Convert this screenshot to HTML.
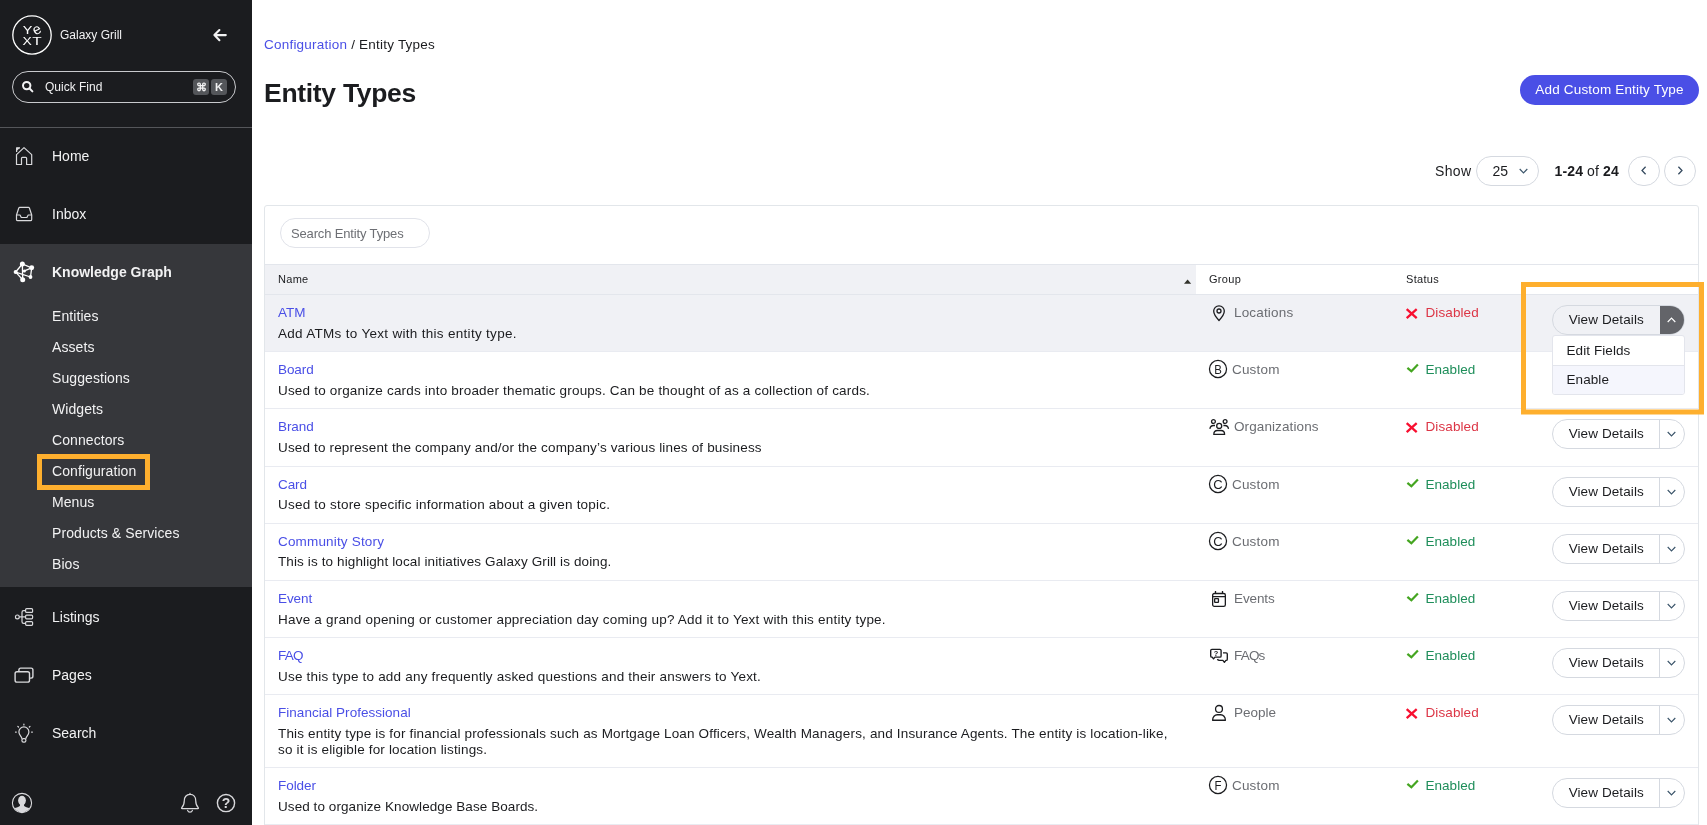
<!DOCTYPE html>
<html lang="en">
<head>
<meta charset="utf-8">
<title>Entity Types</title>
<style>
*{box-sizing:border-box;margin:0;padding:0}
html,body{width:1707px;height:825px;overflow:hidden;background:#fff}
body{font-family:"Liberation Sans",sans-serif;color:#1b1c1f;position:relative}
a{text-decoration:none;color:inherit}
svg{display:block}
.abs{position:absolute}

/* ---------- sidebar ---------- */
#side{position:absolute;left:0;top:0;width:252px;height:825px;background:#1b1c1f;color:#f2f2f3;will-change:transform}
#side .logo{position:absolute;left:12px;top:15px;width:40px;height:40px}
#side .acct{position:absolute;left:60px;top:28px;font-size:12px;line-height:15px;color:#f2f2f3}
#side .back{position:absolute;left:212px;top:27px;width:17px;height:16px}
#side .qf{position:absolute;left:12px;top:71px;width:224px;height:32px;border:1px solid #c9cacd;border-radius:16px}
#side .qf .mag{position:absolute;left:8px;top:7px;width:15px;height:15px}
#side .qf .ph{position:absolute;left:32px;top:8px;font-size:12px;line-height:15px;color:#f2f2f3}
#side .qf .key{position:absolute;top:7px;height:16px;width:16px;border-radius:3px;background:#54565a;color:#f2f2f3;font-size:11px;line-height:16px;text-align:center;font-weight:bold}
#side .div{position:absolute;left:0;top:127px;width:252px;height:1px;background:#55565a}
#side .active{position:absolute;left:0;top:244px;width:252px;height:343px;background:#36373b}
.nav{position:absolute;left:52px;font-size:14px;line-height:18px;color:#f2f2f3;white-space:nowrap}
.nav.b{font-weight:bold}
.sub{position:absolute;left:52px;font-size:14px;line-height:18px;color:#f2f2f3;white-space:nowrap;letter-spacing:.08px}
.ico{position:absolute;left:12px;width:24px;height:24px}
.hl{position:absolute;border:5px solid #feaf2e}

/* ---------- main ---------- */
#main{position:absolute;left:252px;top:0;width:1455px;height:825px;background:#fff;will-change:transform}
.crumb{position:absolute;left:12px;top:36px;font-size:13.5px;line-height:17px;white-space:nowrap;color:#1b1c1f;letter-spacing:.22px}
.crumb a{color:#4a4fe6}
h1{position:absolute;left:12px;top:76px;font-size:26.5px;line-height:34px;font-weight:bold;color:#1b1c1f;white-space:nowrap;letter-spacing:-.3px}
.addbtn{position:absolute;left:1268px;top:75px;width:179px;height:30px;border-radius:15px;background:#4a4fe6;color:#fff;font-size:13.5px;line-height:30px;text-align:center;white-space:nowrap;letter-spacing:.17px}

.pg{position:absolute;top:155.5px;height:30px;font-size:14px;line-height:30px;white-space:nowrap;color:#1b1c1f}
.pill{position:absolute;top:156px;height:30px;border:1px solid #d5d9e0;border-radius:15px;background:#fff}
.card{position:absolute;left:12px;top:205px;width:1435px;height:640px;border:1px solid #e2e6ea;border-radius:3px;background:#fff}
.sinput{position:absolute;left:28px;top:218px;width:150px;height:30px;border:1px solid #e1e3ea;border-radius:15px;font-size:13px;line-height:30px;padding-left:10px;color:#6d6f74;white-space:nowrap;letter-spacing:-.15px}
.thead{position:absolute;left:13px;top:264px;width:1433px;height:31px;border-top:1px solid #e3e6ec;border-bottom:1px solid #e3e6ec;background:#fff}
.thead .sorted{position:absolute;left:0;top:0;width:931px;height:29px;background:#f0f1f5}
.th{position:absolute;top:8px;font-size:11px;line-height:13px;color:#1b1c1f;white-space:nowrap;letter-spacing:.3px}
.row{position:absolute;left:13px;width:1433px;border-bottom:1px solid #e9ebf1}
.row.sel{background:#f0f1f5}
.row .nm{position:absolute;left:13px;top:9px;font-size:13.5px;line-height:17px;color:#4a4fe6;white-space:nowrap;letter-spacing:.1px}
.row .ds{position:absolute;left:13px;top:31px;font-size:13.5px;line-height:16px;color:#1b1c1f;white-space:nowrap;letter-spacing:.22px}
.row .gi{position:absolute;left:943px;top:8px;width:20px;height:20px;overflow:visible}
.row .gp{position:absolute;top:9px;font-size:13.5px;line-height:17px;color:#6b6d72;white-space:nowrap;letter-spacing:.3px}
.row .si{position:absolute;left:1140px;top:12px;width:15px;height:13px}
.row .st{position:absolute;left:1160.5px;top:9px;font-size:13.5px;line-height:17px;white-space:nowrap;letter-spacing:.1px}
.st.dis{color:#dc3545}
.st.en{color:#1e8e5a;letter-spacing:.03px}
.vd{position:absolute;left:1287px;top:10px;width:133px;height:30px;border:1px solid #d5d9e0;border-radius:15px;background:#fff;overflow:hidden}
.vd .t{position:absolute;left:0;top:0;width:106.5px;height:28px;line-height:28px;text-align:center;font-size:13.5px;color:#1b1c1f;letter-spacing:.1px;white-space:nowrap}
.vd .c{position:absolute;left:106px;top:0;width:26px;height:28px;border-left:1px solid #d5d9e0}
.vd .c svg{position:absolute;left:6px;top:10px;width:11px;height:8px}
.vd.open{background:#f0f1f5}
.vd.open .c svg{top:11px;left:5px}
.vd.open .c{background:#636469;border-left-color:#636469;left:107px;top:-1px;height:30px;width:26px}
.menu{position:absolute;left:1300px;top:335px;width:133px;height:60px;border:1px solid #e3e5ec;border-radius:3px;background:#fff;overflow:hidden}
.menu div{height:29px;line-height:30px;padding-left:13.5px;font-size:13.5px;color:#1b1c1f;letter-spacing:.08px;white-space:nowrap}
.menu div+div{border-top:1px solid #e3e5ec;background:#f5f6fd;height:29px;line-height:27px}
</style>
</head>
<body>

<div id="side">
  <svg class="logo" viewBox="0 0 40 40" fill="none" stroke="#fff" stroke-width="1.3">
    <circle cx="20" cy="20" r="19.2"/>
    <g stroke="none" fill="#fff" font-family="Liberation Sans, sans-serif" font-size="11.2">
      <text x="10.7" y="19" textLength="9.6" lengthAdjust="spacingAndGlyphs">Y</text>
      <text x="21" y="19.1" font-size="14.6" transform="rotate(-27 25.1 15.2)">e</text>
      <text x="10.4" y="29.7" textLength="9.3" lengthAdjust="spacingAndGlyphs">X</text>
      <text x="20.3" y="29.7" textLength="9.4" lengthAdjust="spacingAndGlyphs">T</text>
    </g>
  </svg>
  <div class="acct">Galaxy Grill</div>
  <svg class="back" viewBox="0 0 17 16" fill="none" stroke="#f2f2f3" stroke-width="2.1" stroke-linecap="round" stroke-linejoin="round"><path d="M13.8 8.1H3M7.4 3L2.4 8.1L7.4 13.2"/></svg>
  <div class="qf">
    <svg class="mag" viewBox="0 0 15 15" fill="none" stroke="#f2f2f3" stroke-width="2"><circle cx="5.7" cy="6.6" r="3.7"/><path d="M8.6 9.5L11.4 12.4" stroke-linecap="round"/></svg>
    <div class="ph">Quick Find</div>
    <div class="key" style="left:180px">⌘</div>
    <div class="key" style="left:198px">K</div>
  </div>
  <div class="div"></div>
  <div class="active"></div>


  <svg class="ico" style="top:144px" viewBox="0 0 24 24" fill="none" stroke="#d9d9dc" stroke-width="1.2" stroke-linejoin="round"><path d="M4.5 10.6L12 3.6L19.7 10.6V20.5H14.6V14.3Q14.6 13.4 13.7 13.4H10.4Q9.5 13.4 9.5 14.3V20.5H4.5Z"/><path d="M4.6 8V3.8H8" /><path d="M4.6 3.8H8L4.6 7Z" fill="#d9d9dc" stroke="none"/></svg>
  <svg class="ico" style="top:202px" viewBox="0 0 24 24" fill="none" stroke="#d9d9dc" stroke-width="1.2" stroke-linejoin="round"><path d="M4.5 13L6.8 6Q7 5.3 7.7 5.3H16.5Q17.2 5.3 17.4 6L19.7 13V17.4Q19.7 18.7 18.4 18.7H5.8Q4.5 18.7 4.5 17.4Z"/><path d="M4.5 13H8L9.3 15.5H14.9L16.2 13H19.7"/></svg>
  <svg class="ico" style="top:260px" viewBox="0 0 24 24" fill="#fff" stroke="#fff" stroke-width="1.3"><path d="M10.35 4L3.65 12.1L10.7 19.7L10.35 4L19.7 7.8L18.5 17L3.65 12.1M12.4 10.9L19.7 7.8" fill="none"/><circle cx="10.35" cy="4" r="2.5" stroke="none"/><circle cx="19.7" cy="7.8" r="2.45" stroke="none"/><circle cx="3.65" cy="12.1" r="2" stroke="none"/><circle cx="10.7" cy="19.7" r="2.5" stroke="none"/><circle cx="18.5" cy="17" r="1.9" stroke="none"/><circle cx="12.4" cy="10.9" r="1.5" stroke="none"/></svg>
  <svg class="ico" style="top:605px" viewBox="0 0 24 24" fill="none" stroke="#d9d9dc" stroke-width="1.2"><circle cx="5.35" cy="11.9" r="1.9"/><rect x="13.6" y="3.7" width="7" height="3.7" rx="1"/><rect x="13.6" y="10.1" width="7" height="3.7" rx="1"/><rect x="13.6" y="16.6" width="7" height="3.7" rx="1"/><path d="M7.3 11.9H13.6M13.6 5.6H11.6Q10 5.6 10 7.2V16.8Q10 18.4 11.6 18.4H13.6"/></svg>
  <svg class="ico" style="top:663px" viewBox="0 0 24 24" fill="none" stroke="#d9d9dc" stroke-width="1.4"><rect x="3.1" y="8.7" width="14.4" height="10.4" rx="1.9"/><path d="M6.9 8.7V6.9Q6.9 5.1 8.7 5.1H19.1Q20.9 5.1 20.9 6.9V13.3Q20.9 15.1 19.1 15.1H17.5"/></svg>
  <svg class="ico" style="top:721px" viewBox="0 0 24 24" fill="none" stroke="#d9d9dc" stroke-width="1.2" stroke-linecap="round"><path d="M9.9 17.6C9.9 15.6 6.9 14.2 6.9 10.9A5 5 0 0 1 16.9 10.9C16.9 14.2 13.9 15.6 13.9 17.6"/><rect x="9.9" y="17.6" width="4" height="3.6" rx="1.6"/><path d="M11.9 3.1V3.9M5.8 5.3L6.5 6M18 5.3L17.3 6M3.5 11.1H4.3M19.6 11.1H20.4"/></svg>
  <svg class="abs" style="left:10px;top:791px;width:24px;height:24px" viewBox="0 0 24 24"><defs><clipPath id="uc"><circle cx="12" cy="12" r="9.2"/></clipPath></defs><g clip-path="url(#uc)" fill="#d9d9dc"><ellipse cx="12" cy="9.6" rx="3.9" ry="4.8"/><path d="M10 13V14.5C10 16 4 16.5 3 19V23H21V19C20 16.5 14 16 14 14.5V13Z"/></g><circle cx="12" cy="12" r="9.6" fill="none" stroke="#d9d9dc" stroke-width="1.1"/></svg>
  <svg class="abs" style="left:178px;top:791px;width:24px;height:24px" viewBox="0 0 24 24" fill="none" stroke="#d9d9dc" stroke-width="1.2" stroke-linejoin="round" stroke-linecap="round"><path d="M12 2.3V3.4M12 3.4C8.2 3.4 6.3 6.3 6.3 9.5C6.3 13.5 5.2 15.3 3.6 16.9Q3.3 17.6 4.1 17.7H19.9Q20.7 17.6 20.4 16.9C18.8 15.3 17.7 13.5 17.7 9.5C17.7 6.3 15.8 3.4 12 3.4Z"/><path d="M9.6 19.3A2.5 2.5 0 0 0 14.4 19.3"/></svg>
  <svg class="abs" style="left:214px;top:791px;width:24px;height:24px" viewBox="0 0 24 24"><circle cx="12" cy="12.05" r="8.6" fill="none" stroke="#d9d9dc" stroke-width="1.4"/><text x="12" y="17" text-anchor="middle" font-family="Liberation Sans, sans-serif" font-weight="bold" font-size="14" fill="#d9d9dc">?</text></svg>
  <div class="nav" style="top:147px">Home</div>
  <div class="nav" style="top:205px">Inbox</div>
  <div class="nav b" style="top:263px">Knowledge Graph</div>

  <div class="sub" style="top:307px">Entities</div>
  <div class="sub" style="top:338px">Assets</div>
  <div class="sub" style="top:369px">Suggestions</div>
  <div class="sub" style="top:400px">Widgets</div>
  <div class="sub" style="top:431px">Connectors</div>
  <div class="sub" style="top:462px">Configuration</div>
  <div class="sub" style="top:493px">Menus</div>
  <div class="sub" style="top:524px">Products &amp; Services</div>
  <div class="sub" style="top:555px">Bios</div>
  <div class="hl" style="left:37px;top:454px;width:113px;height:36px"></div>

  <div class="nav" style="top:608px">Listings</div>
  <div class="nav" style="top:666px">Pages</div>
  <div class="nav" style="top:724px">Search</div>
</div>

<div id="main">
  <div class="crumb"><a>Configuration</a> / Entity Types</div>
  <h1>Entity Types</h1>
  <div class="addbtn">Add Custom Entity Type</div>

  <div class="pg" style="left:1183px;letter-spacing:.35px">Show</div>
  <div class="pill" style="left:1224px;width:63px"><span class="abs" style="left:15.5px;top:0;font-size:14px;line-height:28px">25</span><svg class="abs" style="left:40.5px;top:10px;width:11px;height:8px" viewBox="0 0 11 8" fill="none" stroke="#3c566b" stroke-width="1.15"><path d="M1.7 2L5.5 5.9L9.3 2"/></svg></div>
  <div class="pg" style="left:1302.5px;letter-spacing:.14px"><b>1-24</b> of <b>24</b></div>
  <div class="pill" style="left:1376px;width:32px"><svg class="abs" style="left:11px;top:8.4px;width:8px;height:11px" viewBox="0 0 8 11" fill="none" stroke="#34495e" stroke-width="1.25"><path d="M5.6 1.7L2 5.5L5.6 9.3"/></svg></div>
  <div class="pill" style="left:1412px;width:32px"><svg class="abs" style="left:11px;top:8.4px;width:8px;height:11px" viewBox="0 0 8 11" fill="none" stroke="#34495e" stroke-width="1.25"><path d="M2.4 1.7L6 5.5L2.4 9.3"/></svg></div>

  <div class="card"></div>
  <div class="sinput">Search Entity Types</div>
  <div class="thead"><div class="sorted"></div>
    <div class="th" style="left:13px">Name</div>
    <svg class="abs" style="left:919px;top:14px;width:8px;height:5px" viewBox="0 0 8 5"><path d="M0 4.7L3.6 0.5L7.2 4.7Z" fill="#33332c"/></svg>
    <div class="th" style="left:944px">Group</div>
    <div class="th" style="left:1141px">Status</div>
  </div>
  <div class="row sel" style="top:295px;height:57px">
    <a class="nm" style="letter-spacing:-0.03px">ATM</a><div class="ds" style="top:31px;letter-spacing:0.3px">Add ATMs to Yext with this entity type.</div>
    <svg class="gi" style="left:944px" viewBox="0 0 20 20" fill="none" stroke="#1b1c1f" stroke-width="1.3"><path d="M10 17.5C10 17.5 4.7 12 4.7 8.1A5.3 5.3 0 0 1 15.3 8.1C15.3 12 10 17.5 10 17.5Z" stroke-linejoin="round"/><circle cx="10" cy="8" r="2"/></svg><div class="gp" style="left:969px;letter-spacing:0.17px">Locations</div>
    <svg class="si" style="top:12px" viewBox="0 0 15 13" fill="none" stroke="#f80f30" stroke-width="2.3"><path d="M1.7 2.1L11.7 11.1M11.7 2.1L1.7 11.1"/></svg><div class="st dis">Disabled</div>
    <div class="vd open"><div class="t">View Details</div><div class="c"><svg viewBox="0 0 11 8" fill="none" stroke="#fff" stroke-width="1.2"><path d="M1.7 6L5.5 2.1L9.3 6"/></svg></div></div>
  </div>
  <div class="row" style="top:352px;height:57px">
    <a class="nm" style="letter-spacing:-0.09px">Board</a><div class="ds" style="top:31px;letter-spacing:0.187px">Used to organize cards into broader thematic groups. Can be thought of as a collection of cards.</div>
    <svg class="gi" style="top:7px" viewBox="0 0 20 20"><circle cx="10" cy="10" r="8.55" fill="none" stroke="#1b1c1f" stroke-width="1.25"/><text x="10" y="14.8" text-anchor="middle" font-family="Liberation Sans, sans-serif" font-size="13" fill="#1b1c1f" textLength="7.6" lengthAdjust="spacingAndGlyphs">B</text></svg><div class="gp" style="left:967px;letter-spacing:0.18px">Custom</div>
    <svg class="si" style="top:10px" viewBox="0 0 15 13" fill="none" stroke="#44a520" stroke-width="2.2"><path d="M2.4 5.8L6.4 9.3L12.9 2.6"/></svg><div class="st en">Enabled</div>
    <div class="vd"><div class="t">View Details</div><div class="c"><svg viewBox="0 0 11 8" fill="none" stroke="#3c566b" stroke-width="1.15"><path d="M1.7 2L5.5 5.9L9.3 2"/></svg></div></div>
  </div>
  <div class="row" style="top:409px;height:58px">
    <a class="nm" style="letter-spacing:-0.09px">Brand</a><div class="ds" style="top:31px;letter-spacing:0.157px">Used to represent the company and/or the company’s various lines of business</div>
    <svg class="gi" viewBox="0 0 20 20" fill="none" stroke="#1b1c1f" stroke-width="1.3"><circle cx="5.45" cy="4.5" r="1.9"/><circle cx="17.1" cy="4.5" r="1.9"/><circle cx="11.2" cy="8.9" r="2.5"/><path d="M5.8 17.4C5.8 15 7.5 13.5 9.4 13.5H13C14.9 13.5 16.6 15 16.6 17.4Z" stroke-linejoin="round"/><path d="M1.9 11.8C2.2 9.7 3.8 8.5 5.5 8.5H7M15.4 8.5H16.9C18.6 8.5 20.2 9.7 20.5 11.8"/></svg><div class="gp" style="left:969px;letter-spacing:0.1px">Organizations</div>
    <svg class="si" style="top:12px" viewBox="0 0 15 13" fill="none" stroke="#f80f30" stroke-width="2.3"><path d="M1.7 2.1L11.7 11.1M11.7 2.1L1.7 11.1"/></svg><div class="st dis">Disabled</div>
    <div class="vd"><div class="t">View Details</div><div class="c"><svg viewBox="0 0 11 8" fill="none" stroke="#3c566b" stroke-width="1.15"><path d="M1.7 2L5.5 5.9L9.3 2"/></svg></div></div>
  </div>
  <div class="row" style="top:467px;height:57px">
    <a class="nm" style="letter-spacing:-0.09px">Card</a><div class="ds" style="top:30px;letter-spacing:0.214px">Used to store specific information about a given topic.</div>
    <svg class="gi" style="top:7px" viewBox="0 0 20 20"><circle cx="10" cy="10" r="8.55" fill="none" stroke="#1b1c1f" stroke-width="1.25"/><text x="10" y="14.8" text-anchor="middle" font-family="Liberation Sans, sans-serif" font-size="13" fill="#1b1c1f" textLength="9.4" lengthAdjust="spacingAndGlyphs">C</text></svg><div class="gp" style="left:967px;letter-spacing:0.18px">Custom</div>
    <svg class="si" style="top:10px" viewBox="0 0 15 13" fill="none" stroke="#44a520" stroke-width="2.2"><path d="M2.4 5.8L6.4 9.3L12.9 2.6"/></svg><div class="st en">Enabled</div>
    <div class="vd"><div class="t">View Details</div><div class="c"><svg viewBox="0 0 11 8" fill="none" stroke="#3c566b" stroke-width="1.15"><path d="M1.7 2L5.5 5.9L9.3 2"/></svg></div></div>
  </div>
  <div class="row" style="top:524px;height:57px">
    <a class="nm" style="letter-spacing:0.17px">Community Story</a><div class="ds" style="top:30px;letter-spacing:0.115px">This is to highlight local initiatives Galaxy Grill is doing.</div>
    <svg class="gi" style="top:7px" viewBox="0 0 20 20"><circle cx="10" cy="10" r="8.55" fill="none" stroke="#1b1c1f" stroke-width="1.25"/><text x="10" y="14.8" text-anchor="middle" font-family="Liberation Sans, sans-serif" font-size="13" fill="#1b1c1f" textLength="9.4" lengthAdjust="spacingAndGlyphs">C</text></svg><div class="gp" style="left:967px;letter-spacing:0.18px">Custom</div>
    <svg class="si" style="top:10px" viewBox="0 0 15 13" fill="none" stroke="#44a520" stroke-width="2.2"><path d="M2.4 5.8L6.4 9.3L12.9 2.6"/></svg><div class="st en">Enabled</div>
    <div class="vd"><div class="t">View Details</div><div class="c"><svg viewBox="0 0 11 8" fill="none" stroke="#3c566b" stroke-width="1.15"><path d="M1.7 2L5.5 5.9L9.3 2"/></svg></div></div>
  </div>
  <div class="row" style="top:581px;height:57px">
    <a class="nm" style="letter-spacing:-0.09px">Event</a><div class="ds" style="top:31px;letter-spacing:0.206px">Have a grand opening or customer appreciation day coming up? Add it to Yext with this entity type.</div>
    <svg class="gi" viewBox="0 0 20 20" fill="none" stroke="#1b1c1f" stroke-width="1.3"><rect x="4.65" y="4.5" width="12.7" height="12.8" rx="1.6"/><path d="M4.65 7.6H17.35M7.5 1.9V4.5M14.5 1.9V4.5"/><rect x="6.65" y="9.6" width="3.8" height="3.8" rx=".5"/></svg><div class="gp" style="left:969px;letter-spacing:-0.1px">Events</div>
    <svg class="si" style="top:10px" viewBox="0 0 15 13" fill="none" stroke="#44a520" stroke-width="2.2"><path d="M2.4 5.8L6.4 9.3L12.9 2.6"/></svg><div class="st en">Enabled</div>
    <div class="vd"><div class="t">View Details</div><div class="c"><svg viewBox="0 0 11 8" fill="none" stroke="#3c566b" stroke-width="1.15"><path d="M1.7 2L5.5 5.9L9.3 2"/></svg></div></div>
  </div>
  <div class="row" style="top:638px;height:57px">
    <a class="nm" style="letter-spacing:-0.8px">FAQ</a><div class="ds" style="top:31px;letter-spacing:0.198px">Use this type to add any frequently asked questions and their answers to Yext.</div>
    <svg class="gi" viewBox="0 0 20 20" fill="none" stroke="#1b1c1f" stroke-width="1.35" stroke-linejoin="round"><path d="M3.9 3.4H11.9Q13.1 3.4 13.1 4.6V9.9Q13.1 11.1 11.9 11.1H7L5.5 12.9L4.2 11.1H3.9Q2.7 11.1 2.7 9.9V4.6Q2.7 3.4 3.9 3.4Z"/><path d="M15 6.9H18.1Q19.3 6.9 19.3 8.1V13.2Q19.3 14.4 18.1 14.4H17.9L16.4 16.3L14.9 14.4H11.5Q9.9 14.4 9.5 13"/><text x="7.9" y="10" text-anchor="middle" font-family="Liberation Sans, sans-serif" font-weight="bold" font-size="7.4" fill="#1b1c1f" stroke="none">?</text></svg><div class="gp" style="left:969px;letter-spacing:-0.8px">FAQs</div>
    <svg class="si" style="top:10px" viewBox="0 0 15 13" fill="none" stroke="#44a520" stroke-width="2.2"><path d="M2.4 5.8L6.4 9.3L12.9 2.6"/></svg><div class="st en">Enabled</div>
    <div class="vd"><div class="t">View Details</div><div class="c"><svg viewBox="0 0 11 8" fill="none" stroke="#3c566b" stroke-width="1.15"><path d="M1.7 2L5.5 5.9L9.3 2"/></svg></div></div>
  </div>
  <div class="row" style="top:695px;height:73px">
    <a class="nm" style="letter-spacing:0.03px">Financial Professional</a><div class="ds" style="top:31px;letter-spacing:0.166px">This entity type is for financial professionals such as Mortgage Loan Officers, Wealth Managers, and Insurance Agents. The entity is location-like,</div><div class="ds" style="top:47px;letter-spacing:0.165px">so it is eligible for location listings.</div>
    <svg class="gi" viewBox="0 0 20 20" fill="none" stroke="#1b1c1f" stroke-width="1.3"><circle cx="11" cy="5.95" r="3.45"/><path d="M4.6 17.25C4.6 14 6.8 11.75 9.3 11.75H12.7C15.2 11.75 17.4 14 17.4 17.25Z" stroke-linejoin="round"/></svg><div class="gp" style="left:969px;letter-spacing:-0.02px">People</div>
    <svg class="si" style="top:12px" viewBox="0 0 15 13" fill="none" stroke="#f80f30" stroke-width="2.3"><path d="M1.7 2.1L11.7 11.1M11.7 2.1L1.7 11.1"/></svg><div class="st dis">Disabled</div>
    <div class="vd"><div class="t">View Details</div><div class="c"><svg viewBox="0 0 11 8" fill="none" stroke="#3c566b" stroke-width="1.15"><path d="M1.7 2L5.5 5.9L9.3 2"/></svg></div></div>
  </div>
  <div class="row" style="top:768px;height:57px">
    <a class="nm" style="letter-spacing:-0.06px">Folder</a><div class="ds" style="top:31px;letter-spacing:0.071px">Used to organize Knowledge Base Boards.</div>
    <svg class="gi" style="top:7px" viewBox="0 0 20 20"><circle cx="10" cy="10" r="8.55" fill="none" stroke="#1b1c1f" stroke-width="1.25"/><text x="10" y="14.8" text-anchor="middle" font-family="Liberation Sans, sans-serif" font-size="13" fill="#1b1c1f" textLength="7" lengthAdjust="spacingAndGlyphs">F</text></svg><div class="gp" style="left:967px;letter-spacing:0.18px">Custom</div>
    <svg class="si" style="top:10px" viewBox="0 0 15 13" fill="none" stroke="#44a520" stroke-width="2.2"><path d="M2.4 5.8L6.4 9.3L12.9 2.6"/></svg><div class="st en">Enabled</div>
    <div class="vd"><div class="t">View Details</div><div class="c"><svg viewBox="0 0 11 8" fill="none" stroke="#3c566b" stroke-width="1.15"><path d="M1.7 2L5.5 5.9L9.3 2"/></svg></div></div>
  </div>
  <div class="menu"><div>Edit Fields</div><div>Enable</div></div>
  <svg class="abs" style="left:1269px;top:282px;width:184px;height:133px" viewBox="0 0 184 133"><rect x="2.5" y="2.5" width="178" height="127.5" fill="none" stroke="#feaf2e" stroke-width="5"/></svg>
</div>

</body>
</html>
